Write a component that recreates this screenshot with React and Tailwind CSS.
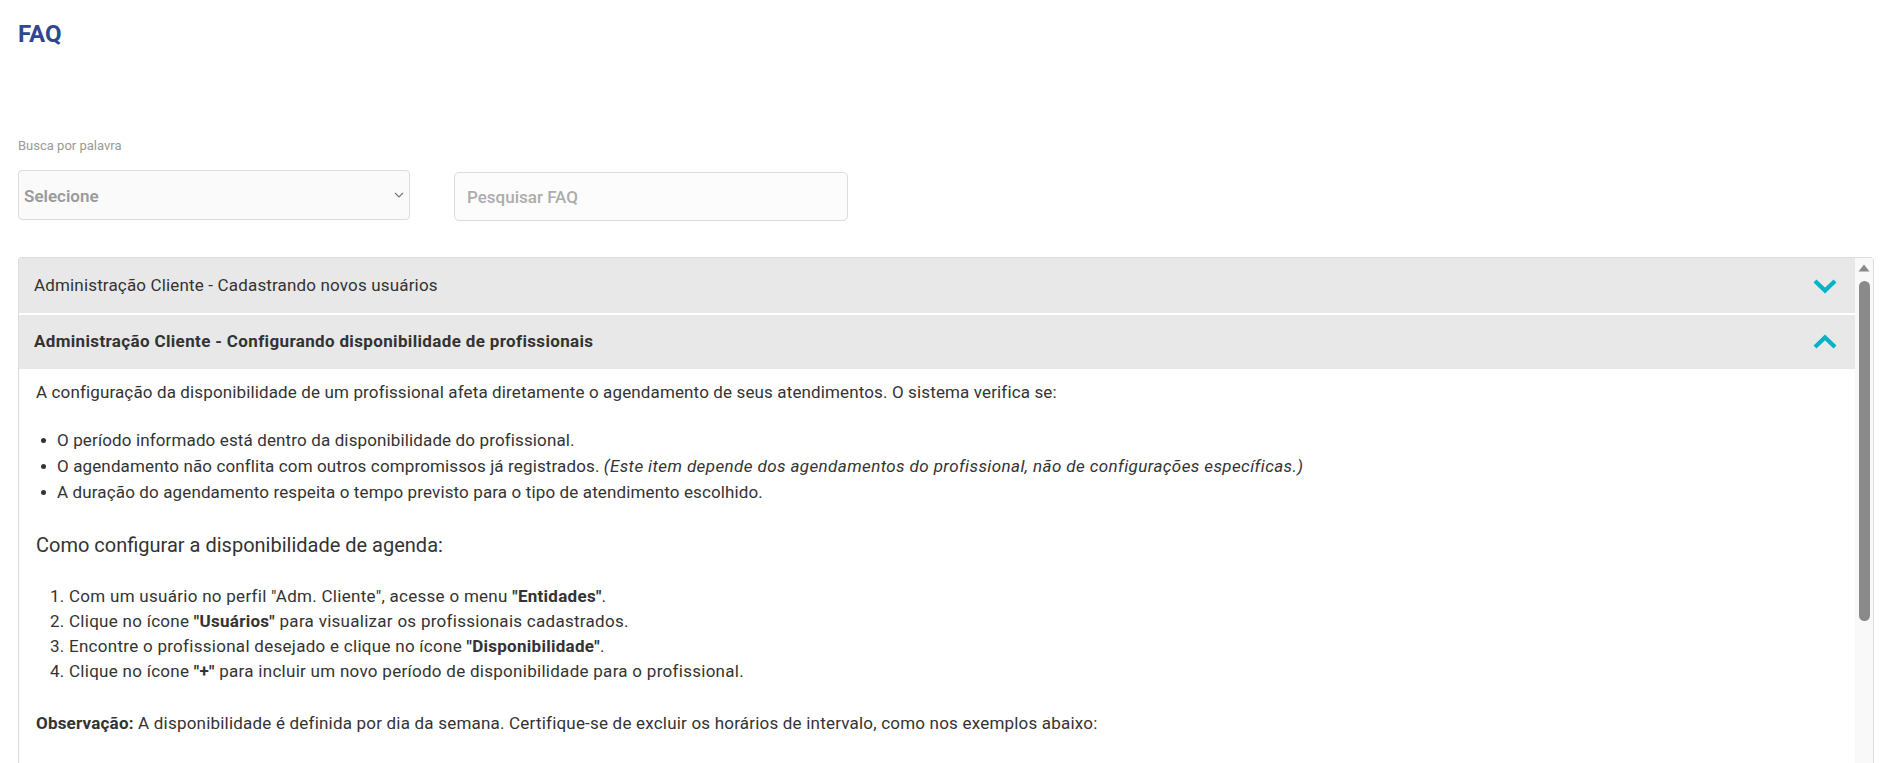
import React from 'react';

// Chevron do acordeão (aberto / fechado)
function Chevron({ up }) {
  return (
    <svg width="26" height="16" viewBox="0 0 26 16" className="shrink-0">
      <polyline
        points={up ? '3,13 13,3.5 23,13' : '3,3 13,12.5 23,3'}
        fill="none"
        stroke="#00b3c6"
        strokeWidth="4.2"
        strokeLinejoin="miter"
      />
    </svg>
  );
}

function AccordionHeader({ title, open, first }) {
  return (
    <div
      className={`flex items-center justify-between bg-[#e8e8e8] pl-[15px] pr-[17px] ${
        first ? 'h-[55px]' : 'mt-[2px] h-[54px]'
      }`}
    >
      <span
        className={`text-[17px] text-[#333] ${open ? 'font-bold tracking-[0.35px]' : 'tracking-[0.16px]'}`}
      >
        {title}
      </span>
      <Chevron up={open} />
    </div>
  );
}

function Bullet({ children }) {
  return (
    <li className="flex">
      <span className="flex h-[26px] w-[21px] shrink-0 items-center pl-[5px]">
        <span className="h-[5px] w-[5px] rounded-full bg-[#333]" />
      </span>
      <span>{children}</span>
    </li>
  );
}

export default function App() {
  return (
    <div className="h-[763px] overflow-hidden bg-white pl-[18px] pr-[13px] pt-[20px] font-['Roboto',sans-serif]">
      {/* Título */}
      <h1 className="text-[24px] font-bold leading-[28px] text-[#2f4791]">FAQ</h1>

      {/* Filtros */}
      <label className="mt-[90px] block text-[13px] leading-[16px] text-[#9a9a9a]">Busca por palavra</label>
      <div className="mt-[16px] flex items-start gap-[44px]">
        <div className="flex h-[50px] w-[392px] items-center justify-between rounded border border-[#dcdcdc] bg-[#fafafa] pl-[5px] pr-[5px]">
          <span className="pt-[3px] text-[17px] font-semibold text-[#9b9b9b]">Selecione</span>
          <svg width="10" height="6" viewBox="0 0 10 6">
            <polyline points="1,1 5,5 9,1" fill="none" stroke="#777" strokeWidth="1.2" />
          </svg>
        </div>
        <div className="mt-[2px] flex h-[49px] w-[394px] items-center rounded-[5px] border border-[#dcdcdc] bg-[#fcfcfc] pl-[12px]">
          <span className="pt-[3px] text-[17px] font-medium text-[#adadad]">Pesquisar FAQ</span>
        </div>
      </div>

      {/* Acordeão */}
      <div className="mt-[36px] flex h-[600px] rounded-t border border-b-0 border-[#dcdcdc]">
        <div className="min-w-0 flex-1">
          <AccordionHeader first title="Administração Cliente - Cadastrando novos usuários" />
          <AccordionHeader open title="Administração Cliente - Configurando disponibilidade de profissionais" />

          <div className="pl-[17px] pt-[10px] text-[17px] tracking-[0.13px] text-[#333]">
            <p className="leading-[26px]">
              A configuração da disponibilidade de um profissional afeta diretamente o agendamento de seus atendimentos. O sistema verifica se:
            </p>
            <ul className="mt-[22px] leading-[26px]">
              <Bullet>O período informado está dentro da disponibilidade do profissional.</Bullet>
              <Bullet>
                O agendamento não conflita com outros compromissos já registrados.{' '}
                <em className="tracking-[0.4px]">
                  (Este item depende dos agendamentos do profissional, não de configurações específicas.)
                </em>
              </Bullet>
              <Bullet>A duração do agendamento respeita o tempo previsto para o tipo de atendimento escolhido.</Bullet>
            </ul>

            <h2 className="mt-[26px] text-[20px] leading-[28px] tracking-normal text-[#333]">
              Como configurar a disponibilidade de agenda:
            </h2>

            <div className="mt-[25px] pl-[33px]">
              <ol className="list-decimal leading-[25px] tracking-[0.28px]">
                <li>
                  Com um usuário no perfil "Adm. Cliente", acesse o menu <strong>"Entidades"</strong>.
                </li>
                <li>
                  Clique no ícone <strong>"Usuários"</strong> para visualizar os profissionais cadastrados.
                </li>
                <li>
                  Encontre o profissional desejado e clique no ícone <strong>"Disponibilidade"</strong>.
                </li>
                <li>
                  Clique no ícone <strong>"+"</strong> para incluir um novo período de disponibilidade para o profissional.
                </li>
              </ol>
            </div>

            <p className="mt-[27px] leading-[25px] tracking-[0.2px]">
              <strong>Observação:</strong> A disponibilidade é definida por dia da semana. Certifique-se de excluir os horários de intervalo, como nos exemplos abaixo:
            </p>
          </div>
        </div>

        {/* Barra de rolagem */}
        <div className="flex w-[18px] shrink-0 flex-col items-center bg-[#f9f9f9]">
          <svg width="12" height="8" viewBox="0 0 12 8" className="mt-[6px]">
            <polygon points="6,0.5 11.5,7.5 0.5,7.5" fill="#8a8a8a" />
          </svg>
          <div className="mt-[9px] h-[340px] w-[11px] rounded-full bg-[#8a8a8a]" />
        </div>
      </div>
    </div>
  );
}
